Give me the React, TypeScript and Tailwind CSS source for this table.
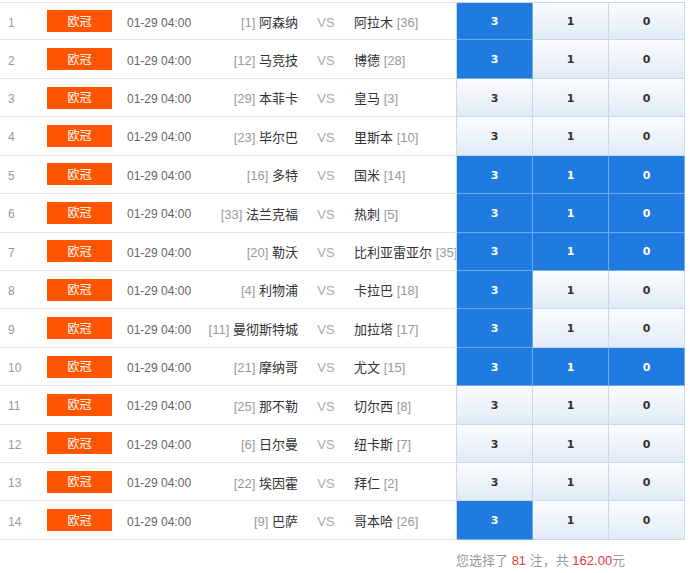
import React from 'react'

type Match = {
  no: number
  time: string
  homeRank: number
  home: string
  away: string
  awayRank: number
  picks: [boolean, boolean, boolean]
}

const matches: Match[] = [
  { no: 1, time: '01-29 04:00', homeRank: 1, home: '阿森纳', away: '阿拉木', awayRank: 36, picks: [true, false, false] },
  { no: 2, time: '01-29 04:00', homeRank: 12, home: '马竞技', away: '博德', awayRank: 28, picks: [true, false, false] },
  { no: 3, time: '01-29 04:00', homeRank: 29, home: '本菲卡', away: '皇马', awayRank: 3, picks: [false, false, false] },
  { no: 4, time: '01-29 04:00', homeRank: 23, home: '毕尔巴', away: '里斯本', awayRank: 10, picks: [false, false, false] },
  { no: 5, time: '01-29 04:00', homeRank: 16, home: '多特', away: '国米', awayRank: 14, picks: [true, true, true] },
  { no: 6, time: '01-29 04:00', homeRank: 33, home: '法兰克福', away: '热刺', awayRank: 5, picks: [true, true, true] },
  { no: 7, time: '01-29 04:00', homeRank: 20, home: '勒沃', away: '比利亚雷亚尔', awayRank: 35, picks: [true, true, true] },
  { no: 8, time: '01-29 04:00', homeRank: 4, home: '利物浦', away: '卡拉巴', awayRank: 18, picks: [true, false, false] },
  { no: 9, time: '01-29 04:00', homeRank: 11, home: '曼彻斯特城', away: '加拉塔', awayRank: 17, picks: [true, false, false] },
  { no: 10, time: '01-29 04:00', homeRank: 21, home: '摩纳哥', away: '尤文', awayRank: 15, picks: [true, true, true] },
  { no: 11, time: '01-29 04:00', homeRank: 25, home: '那不勒', away: '切尔西', awayRank: 8, picks: [false, false, false] },
  { no: 12, time: '01-29 04:00', homeRank: 6, home: '日尔曼', away: '纽卡斯', awayRank: 7, picks: [false, false, false] },
  { no: 13, time: '01-29 04:00', homeRank: 22, home: '埃因霍', away: '拜仁', awayRank: 2, picks: [false, false, false] },
  { no: 14, time: '01-29 04:00', homeRank: 9, home: '巴萨', away: '哥本哈', awayRank: 26, picks: [true, false, false] },
]

const labels = ['3', '1', '0']

// 投注セル（選択状態で青く塗る）
const OddsCell = ({ label, selected }: { label: string; selected: boolean }) => (
  <div
    className={
      selected
        ? 'flex w-[76px] items-center justify-center border-r border-b border-[#6fa9ec] bg-[#1f7be0] text-white'
        : 'flex w-[76px] items-center justify-center border-r border-b border-[#c9d8ea] bg-gradient-to-b from-[#fbfcfe] to-[#e2ebf7] text-[#333]'
    }
  >
    <span className="pt-[3px] font-['DejaVu_Sans',sans-serif] text-[11px] font-bold">{label}</span>
  </div>
)

const MatchRow = ({ m, first }: { m: Match; first: boolean }) => (
  <div className="flex h-[38.43px]">
    <div
      className={`flex w-[456px] items-center border-b border-[#e3e3e3] ${first ? 'border-t' : ''}`}
    >
      <div className="w-[47px] pl-2 pt-[3px] text-[12px] text-[#999]">{m.no}</div>
      <div className="flex h-[22px] w-[65px] items-center justify-center bg-[#ff5500] pt-[1px] text-[12px] text-white">
        欧冠
      </div>
      <div className="w-[96px] pl-[15px] pt-[3px] text-[12px] text-[#666]">{m.time}</div>
      <div className="w-[90px] whitespace-nowrap pt-[3px] text-right text-[13px] text-[#333]">
        <span className="text-[#999]">[{m.homeRank}]</span> {m.home}
      </div>
      <div className="w-[56px] pt-[3px] text-center text-[13px] text-[#aaa]">VS</div>
      <div className="flex-1 overflow-hidden whitespace-nowrap pt-[3px] text-[13px] text-[#333]">
        {m.away} <span className="text-[#999]">[{m.awayRank}]</span>
      </div>
    </div>
    <div className={`flex border-l border-[#c9d8ea] ${first ? 'border-t' : ''}`}>
      {labels.map((l, i) => (
        <OddsCell key={l} label={l} selected={m.picks[i]} />
      ))}
    </div>
  </div>
)

export default function App() {
  return (
    <div className="h-[573px] w-[690px] overflow-hidden bg-white pt-[2px] font-['Liberation_Sans','Noto_Sans_CJK_SC',sans-serif]">
      {matches.map((m, i) => (
        <MatchRow key={m.no} m={m} first={i === 0} />
      ))}
      <div className="pl-[456px] pt-[11px] text-[13px] text-[#999]">
        您选择了 <span className="text-[#e4393c]">81</span> 注，共{' '}
        <span className="text-[#e4393c]">162.00</span>元
      </div>
    </div>
  )
}
